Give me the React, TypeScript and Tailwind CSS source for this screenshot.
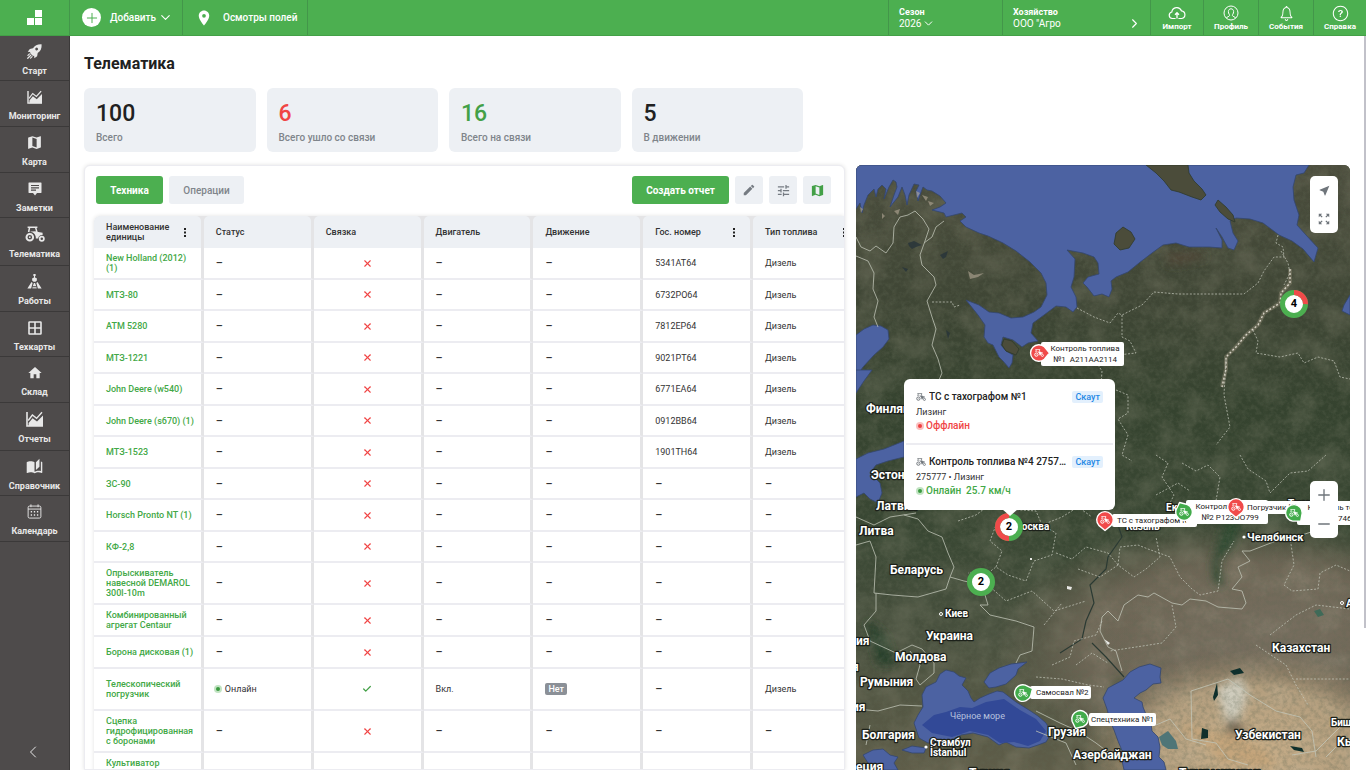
import type { ReactNode } from 'react';
import clsx from 'clsx';
import { IoIosNotificationsOutline, IoIosHelpCircleOutline } from 'react-icons/io';
import { MdAutoStories, MdEdit, MdHome, MdMap, MdNearMe, MdPlace, MdTune, MdZoomOutMap } from 'react-icons/md';
import { Check, ChevronDown, ChevronLeft, ChevronRight, Minus, Plus, X } from 'lucide-react';

/* ---------- Icons ---------- */

function TractorIcon({ className }: { className?: string }) {
  return (
    <svg viewBox="0 0 20 16" className={className} fill="none" aria-hidden="true">
      <circle cx="4.8" cy="11.2" r="3.3" stroke="currentColor" strokeWidth="2" />
      <circle cx="4.8" cy="11.2" r="0.9" fill="currentColor" />
      <circle cx="16.8" cy="12.8" r="2.1" stroke="currentColor" strokeWidth="1.7" />
      <path d="M2.6 1.2h9.8M4.6 1.4l-1 4.6M10.6 1.4l1.4 5" stroke="currentColor" strokeWidth="1.5" />
      <path d="M3 5.8c4-.8 7.3 1.5 7.8 5.2v1.6h2.4c.2-2.6 2-3.8 4.4-3.6V6.8L12 5.8l-1.6-.6z" fill="currentColor" />
    </svg>
  );
}

function RocketIcon({ className }: { className?: string }) {
  return (
    <svg viewBox="0 0 16 16" className={className} aria-hidden="true">
      <path
        fillRule="evenodd"
        d="M15.6.4C11.2.2 8.4 1.6 6.4 4.6L3 5.2.8 8.2l2.8.2-.4 1.2 3.2 3.2 1.2-.4.2 2.8 3-2.2.6-3.4c3-2 4.4-4.8 4.2-9.2zM9.4 6.6a1.5 1.5 0 1 1 2.1-2.1 1.5 1.5 0 0 1-2.1 2.1z"
        fill="currentColor"
      />
      <path d="M2.6 10.6L1 12.2M4 12L.8 15.2M5.4 13.4L3.8 15" stroke="currentColor" strokeWidth="1.3" strokeLinecap="round" />
    </svg>
  );
}

function ChartIcon({ className }: { className?: string }) {
  return (
    <svg viewBox="0 0 18 16" className={className} fill="none" aria-hidden="true">
      <path d="M1 1v14h16" stroke="currentColor" strokeWidth="1.6" />
      <path d="M2.2 9.5L6.4 4l4.2 3.4L16 1.2" stroke="currentColor" strokeWidth="1.4" />
      <path d="M2.6 15V12l4-4.8 4.4 3.4L17 4.6V15z" fill="currentColor" />
    </svg>
  );
}

function NoteIcon({ className }: { className?: string }) {
  return (
    <svg viewBox="0 0 14 14" className={className} aria-hidden="true">
      <path
        fillRule="evenodd"
        d="M1 .6h12c.3 0 .5.2.5.5v9.4c0 .3-.2.5-.5.5H9l-2 2.4L5 11H1c-.3 0-.5-.2-.5-.5V1.1C.5.8.7.6 1 .6zM3 3v1.1h8V3zm0 2.3v1.1h8V5.3zm0 2.3v1.1h5V7.6z"
        fill="currentColor"
      />
    </svg>
  );
}

function GridIcon({ className }: { className?: string }) {
  return (
    <svg viewBox="0 0 14 14" className={className} fill="none" stroke="currentColor" strokeWidth="1.6" aria-hidden="true">
      <rect x="1" y="1" width="12" height="12" rx="0.6" />
      <path d="M7 1v12M1 7h12" />
    </svg>
  );
}

function WorksIcon({ className }: { className?: string }) {
  return (
    <svg viewBox="0 0 16 16" className={className} aria-hidden="true">
      <path d="M6.8 0h2.4v2h-.6v1.8l2 1-.2 2.4-1.4 1H7l-1.4-1-.2-2.4 2-1V2h-.6z" fill="currentColor" />
      <path d="M4.8 8.6L.4 15.4h4L6 9.6zM11.2 8.6l4.4 6.8h-4L10 9.6zM7.4 9.6h1.2l1.2 3.2H6.2z" fill="currentColor" />
      <path d="M6 13.6h4l.4 1.8H5.6z" fill="currentColor" opacity=".75" />
    </svg>
  );
}

function CalendarIcon({ className }: { className?: string }) {
  return (
    <svg viewBox="0 0 16 16" className={className} fill="none" stroke="currentColor" aria-hidden="true">
      <rect x="1.2" y="2.2" width="13.6" height="12.8" rx="1.5" />
      <path d="M1.2 5.4h13.6M4.2.4v3M11.8.4v3" />
      <path d="M4 8.2h1.4M7.3 8.2h1.4M10.6 8.2H12M4 11.6h1.4M7.3 11.6h1.4M10.6 11.6H12" strokeWidth="1.6" />
    </svg>
  );
}

function ProfileIcon({ className }: { className?: string }) {
  return (
    <svg viewBox="0 0 16 16" className={className} fill="none" stroke="currentColor" aria-hidden="true">
      <circle cx="8" cy="8" r="7" />
      <path d="M3.4 13c.5-1.4 3-1.2 3.2-2.6.1-.8-1.2-1.6-1.2-3.8 0-1.7 1.1-2.8 2.6-2.8s2.6 1.1 2.6 2.8c0 2.2-1.3 3-1.2 3.8.2 1.4 2.7 1.2 3.2 2.6" />
    </svg>
  );
}

function CloudIcon({ className }: { className?: string }) {
  return (
    <svg viewBox="0 0 18 14" className={className} fill="none" stroke="currentColor" aria-hidden="true">
      <path d="M7.6 12.5H4.2A3.3 3.3 0 0 1 3.8 6 5 5 0 0 1 13.4 4.8a3.9 3.9 0 0 1 .4 7.7H10.4" strokeWidth="1.2" />
      <path d="M9 12.5V7M7 8.8l2-2.1 2 2.1" strokeWidth="1.3" />
    </svg>
  );
}

function LogoIcon() {
  return (
    <svg viewBox="0 0 15 15" className="size-[15px]" fill="#fff" aria-hidden="true">
      <path d="M8 0h7v7H8zM0 8h7v7H0zM8 8h7v7H8z" />
    </svg>
  );
}

function Dots() {
  return (
    <svg viewBox="0 0 2 9" className="h-[9px] w-[2px] shrink-0" fill="#222" aria-hidden="true">
      <path d="M0 0h2v2H0zM0 3.5h2v2H0zM0 7h2v2H0z" />
    </svg>
  );
}

function StatusDot({ online }: { online?: boolean }) {
  return (
    <span
      className={clsx(
        'inline-block size-1 shrink-0 rounded-full ring-2',
        online ? 'bg-[#3a9a40] ring-[#4caf50]/35' : 'bg-[#f04040] ring-[#f04848]/35',
      )}
    />
  );
}

/* ---------- Header ---------- */

function Header() {
  const actions: { label: string; icon: ReactNode; width: string }[] = [
    { label: 'Импорт', icon: <CloudIcon className="h-[14px] w-[18px]" />, width: 'w-[53px] border-r' },
    { label: 'Профиль', icon: <ProfileIcon className="size-4" />, width: 'w-[55px] border-r' },
    { label: 'События', icon: <IoIosNotificationsOutline className="size-[19px]" />, width: 'w-[55px] border-r' },
    { label: 'Справка', icon: <IoIosHelpCircleOutline className="size-[19px]" />, width: 'w-[52px]' },
  ];

  return (
    <header className="flex h-9 shrink-0 border-b border-[#43a047] bg-[#4caf50] text-white">
      <a href="#" aria-label="Главная" className="flex w-[70px] items-center justify-center border-r border-[#43964a]">
        <LogoIcon />
      </a>
      <button type="button" className="flex w-[113px] items-center border-r border-[#43964a] pl-3 text-[10px] font-medium">
        <span className="mr-[9px] flex size-[19px] items-center justify-center rounded-full bg-white text-[#4caf50]">
          <Plus className="size-4" strokeWidth={1.5} />
        </span>
        Добавить
        <ChevronDown className="ml-[2px] size-[15px]" strokeWidth={1.8} />
      </button>
      <a href="#" className="flex w-[125px] items-center border-r border-[#43964a] pl-3 text-[10px] font-medium whitespace-nowrap">
        <MdPlace className="mr-[10px] size-[18px]" />
        Осмотры полей
      </a>
      <div className="flex-1 border-r border-[#43964a]" />
      <button type="button" className="w-[114px] border-r border-[#43964a] pl-[10px] text-left leading-[11px]">
        <span className="block text-[9px] font-bold">Сезон</span>
        <span className="flex h-[11px] items-center text-[10px]">
          2026 <ChevronDown className="ml-px size-[13px]" strokeWidth={1.8} />
        </span>
      </button>
      <button type="button" className="w-[148px] border-r border-[#43964a] pr-2 pl-[10px] text-left leading-[11px]">
        <span className="block text-[9px] font-bold">Хозяйство</span>
        <span className="flex h-[11px] items-center justify-between text-[10px]">
          ООО "Агро <ChevronRight className="size-[15px]" strokeWidth={1.8} />
        </span>
      </button>
      {actions.map((a) => (
        <button
          key={a.label}
          type="button"
          className={clsx(
            'flex flex-col items-center justify-center border-[#43964a] text-[8px] leading-[9px] font-bold',
            a.width,
          )}
        >
          <span className="flex h-[18px] items-center">{a.icon}</span>
          {a.label}
        </button>
      ))}
    </header>
  );
}

/* ---------- Sidebar ---------- */

const NAV: { label: string; icon: ReactNode; tall?: boolean }[] = [
  { label: 'Старт', icon: <RocketIcon className="size-[15px]" /> },
  { label: 'Мониторинг', icon: <ChartIcon className="h-[14px] w-4" /> },
  { label: 'Карта', icon: <MdMap className="size-[17px]" /> },
  { label: 'Заметки', icon: <NoteIcon className="size-[14px]" /> },
  { label: 'Телематика', icon: <TractorIcon className="h-4 w-5" />, tall: true },
  { label: 'Работы', icon: <WorksIcon className="size-[15px]" /> },
  { label: 'Техкарты', icon: <GridIcon className="size-[14px]" /> },
  { label: 'Склад', icon: <MdHome className="size-4" /> },
  { label: 'Отчеты', icon: <ChartIcon className="h-4 w-[18px]" />, tall: true },
  { label: 'Справочник', icon: <MdAutoStories className="size-[17px]" /> },
  { label: 'Календарь', icon: <CalendarIcon className="size-[15px]" /> },
];

function Sidebar() {
  return (
    <nav className="flex w-[70px] shrink-0 flex-col border-r border-[#3b3939] bg-[#4e4b4b] text-[#e8e8e8]">
      {NAV.map((item, i) => (
        <a
          key={item.label}
          href="#"
          className={clsx(
            'flex shrink-0 flex-col items-center border-b border-[#3b3939] pt-[6px] text-[9px] leading-[10px] font-bold',
            item.tall ? 'h-12' : i % 3 ? 'h-[46px]' : 'h-[45px]',
          )}
        >
          <span className={clsx('mb-[5px] flex items-center', item.tall ? 'h-5' : 'h-[19px]')}>{item.icon}</span>
          {item.label}
        </a>
      ))}
      <button type="button" aria-label="Свернуть" className="mt-auto mb-2 flex h-5 items-center justify-center pr-1">
        <ChevronLeft className="size-5" strokeWidth={1.2} />
      </button>
    </nav>
  );
}

/* ---------- Stats ---------- */

const STATS = [
  { value: 100, label: 'Всего', color: 'text-[#212121]' },
  { value: 6, label: 'Всего ушло со связи', color: 'text-[#f04545]' },
  { value: 16, label: 'Всего на связи', color: 'text-[#43a047]' },
  { value: 5, label: 'В движении', color: 'text-[#212121]' },
];

function Stats() {
  return (
    <div className="grid w-[719px] grid-cols-4 gap-[11px]">
      {STATS.map((s) => (
        <div key={s.label} className="h-16 rounded-md bg-[#edf0f4] px-3 pt-[13px]">
          <div className={clsx('text-[23px] leading-[26px] font-medium', s.color)}>{s.value}</div>
          <div className="mt-1 text-[10px] leading-[14px] font-medium text-[#7f858b]">{s.label}</div>
        </div>
      ))}
    </div>
  );
}

/* ---------- Table ---------- */

const COLUMNS = [
  { title: 'Наименование единицы', menu: true },
  { title: 'Статус' },
  { title: 'Связка' },
  { title: 'Двигатель' },
  { title: 'Движение' },
  { title: 'Гос. номер', menu: true },
  { title: 'Тип топлива', menu: true },
];

type Unit = { name: string; plate?: string; fuel?: string; online?: boolean; tall?: boolean };

const UNITS: Unit[] = [
  { name: 'New Holland (2012) (1)', plate: '5341АТ64', fuel: 'Дизель' },
  { name: 'МТЗ-80', plate: '6732РО64', fuel: 'Дизель' },
  { name: 'АТМ 5280', plate: '7812ЕР64', fuel: 'Дизель' },
  { name: 'МТЗ-1221', plate: '9021РТ64', fuel: 'Дизель' },
  { name: 'John Deere (w540)', plate: '6771ЕА64', fuel: 'Дизель' },
  { name: 'John Deere (s670) (1)', plate: '0912ВВ64', fuel: 'Дизель' },
  { name: 'МТЗ-1523', plate: '1901ТН64', fuel: 'Дизель' },
  { name: 'ЗС-90' },
  { name: 'Horsch Pronto NT (1)' },
  { name: 'КФ-2,8' },
  { name: 'Опрыскиватель навесной DEMAROL 300l-10m', tall: true },
  { name: 'Комбинированный агрегат Centaur' },
  { name: 'Борона дисковая (1)' },
  { name: 'Телескопический погрузчик', fuel: 'Дизель', online: true, tall: true },
  { name: 'Сцепка гидрофицированная с боронами', tall: true },
  { name: 'Культиватор предпосевной прицепной', tall: true },
];

const CELL = 'border-r-[3px] border-b-2 border-r-[#e4e4e6] border-b-[#ececf1] pl-3 align-middle';

function Empty() {
  return <span className="block pt-[2px] text-[11px] font-medium">–</span>;
}

function UnitsTable() {
  return (
    <div className="ml-[9px] overflow-hidden rounded-tl-md shadow-[0_0_4px_rgba(0,0,0,0.12)]">
      <table className="w-[769px] table-fixed border-separate border-spacing-0 text-left text-[9px] leading-[10px] text-[#333]">
        <thead>
          <tr className="h-8">
            {COLUMNS.map((c) => (
              <th key={c.title} scope="col" className="bg-[#e4e4e6] p-0 pr-[3px] font-medium first:rounded-tl-md">
                <span className="flex h-8 items-center justify-between rounded-t-[5px] bg-[#edf0f4] pr-[15px] pl-3">
                  <span className="max-w-[66px]">{c.title}</span>
                  {c.menu && <Dots />}
                </span>
              </th>
            ))}
          </tr>
        </thead>
        <tbody>
          {UNITS.map((u, i) => (
            <tr key={u.name} className={clsx(u.tall ? 'h-[42px]' : i % 2 && i < 10 ? 'h-[31px]' : 'h-8')}>
              <td className={clsx(CELL, 'pr-[5px] font-medium')}>
                <a href="#" className="block text-[#42a846]">
                  {u.name}
                </a>
              </td>
              <td className={CELL}>
                {u.online ? (
                  <span className="flex items-center gap-[5px]">
                    <StatusDot online /> Онлайн
                  </span>
                ) : (
                  <Empty />
                )}
              </td>
              <td className={clsx(CELL, 'pr-3')}>
                {u.online ? (
                  <Check className="mx-auto size-[10px] text-[#43a047]" strokeWidth={3} />
                ) : (
                  <X className="mx-auto size-[11px] text-[#f04545]" strokeWidth={2.4} />
                )}
              </td>
              <td className={CELL}>{u.online ? 'Вкл.' : <Empty />}</td>
              <td className={CELL}>
                {u.online ? (
                  <span className="inline-block rounded-xs bg-[#8b9097] px-[3px] py-px font-medium text-white">Нет</span>
                ) : (
                  <Empty />
                )}
              </td>
              <td className={CELL}>{u.plate ?? <Empty />}</td>
              <td className={CELL}>{u.fuel ?? <Empty />}</td>
            </tr>
          ))}
        </tbody>
      </table>
    </div>
  );
}

function UnitsPanel() {
  const iconButton = 'flex size-7 items-center justify-center rounded-[3px] bg-[#edf0f4] text-[#757b82]';
  return (
    <section className="overflow-hidden rounded-t-md border border-[#ececf1] bg-white shadow-[0_0_4px_rgba(0,0,0,0.12)]">
      <div className="flex items-center gap-[6px] pt-[10px] pr-[13px] pb-3 pl-[11px] text-[10px]">
        <button type="button" className="h-7 w-[67px] rounded-[3px] bg-[#4caf50] font-bold text-white">
          Техника
        </button>
        <button type="button" className="h-7 w-[75px] rounded-[3px] bg-[#edf0f4] font-medium text-[#7f858b]">
          Операции
        </button>
        <button type="button" className="ml-auto h-7 w-[97px] rounded-[3px] bg-[#4caf50] font-bold text-white">
          Создать отчет
        </button>
        <button type="button" aria-label="Редактировать" className={iconButton}>
          <MdEdit className="size-[14px]" />
        </button>
        <button type="button" aria-label="Настройки" className={iconButton}>
          <MdTune className="size-[15px]" />
        </button>
        <button type="button" aria-label="Карта" className={iconButton}>
          <MdMap className="size-[15px] text-[#43a047]" />
        </button>
      </div>
      <UnitsTable />
    </section>
  );
}

/* ---------- Map ---------- */

const SEAS = [
  // Barents and White seas
  'M0 0H453L448 8 440 10 437 22 438 35 443 50 441 60 450 70 462 83 458 97 447 84 436 76 423 70 407 58 394 54 380 53 374 56 377 68 382 76 378 85 372 83 366 72 360 63 366 75 366 83 353 82 333 82 320 78 307 80 296 88 283 98 272 107 260 112 255 116 256 124 253 132 246 129 238 131 231 122 227 118 232 112 243 109 242 98 238 92 227 88 211 85 219 94 218 112 215 122 220 132 221 142 217 147 210 142 200 141 188 150 177 158 175 168 182 176 172 178 166 182 157 175 147 172 145 180 150 186 157 190 156 198 153 203 147 196 143 192 137 180 132 178 128 172 129 160 122 150 110 135 123 140 133 147 143 148 155 153 167 152 178 147 185 142 191 130 190 118 185 108 174 97 160 86 147 78 132 71 123 68 110 62 104 56 110 52 106 48 98 50 90 52 88 48 76 45 84 42 90 38 84 31 76 26 71 25 67 22 64 30 62 36 60 26 63 20 58 19 53 30 51 40 49 30 46 22 42 32 34 42 38 30 41 22 40 17 37 15 33 22 28 34 30 24 26 20 22 24 20 32 18 24 12 30 8 40 6 48 4 38 0 44Z',
  'M0 170L8 164 17 160 25 161 32 165 33 174 27 182 18 190 7 202 0 212Z',
  'M0 205H16L8 216 0 228Z',
  // Gulf of Finland and Riga
  'M0 294L12 288 28 284 48 276V292L32 296 20 300 14 308 24 318 26 328 22 338 14 334 8 328 0 332Z',
  // Azov
  'M128 517L134 508 143 503 155 499 171 497 162 504 160 510 150 519 140 522 133 523Z',
  // Caspian
  'M247 533L252 523 267 515 274 507 283 502 294 499 305 503 304 512 305 518 297 519 290 525 284 528 278 533 286 537 287 542 291 552 295 558 296 566 302 572 304 582 303 592 308 597 310 605H268L266 596 267 588 262 576 258 565 254 556 251 544Z',
  // Aegean and Marmara
  'M7 590L17 585 27 584 34 590 42 592 38 598 42 605H18L12 598Z',
  'M46 585L56 581 70 583 68 588 56 588Z',
  'M494 130L488 140 486 146 494 150Z',
];

const BLACK_SEA =
  'M90 505L98 507 103 511 110 513 106 520 112 526 115 533 118 537 124 533 133 529 141 526 147 527 160 537 173 545 182 551 190 558 194 565 193 572 190 577 182 580 173 583 160 582 150 577 143 580 132 572 117 568 105 570 95 576 83 577 72 578 63 573 58 558 62 550 67 542 66 530 70 522 80 517 84 509Z';

const ISLANDS = [
  'M290 0H332L333 8 338 16 346 24 350 30 345 35 336 32 323 27 315 25 308 16 300 8Z',
  'M267 62L275 67 279 74 273 83 264 85 258 79 260 68Z',
  'M362 35L370 42 377 50 379 57 372 54 364 47 359 40Z',
  'M148 174L156 176 163 184 160 190 150 186 146 180Z',
];

const STATE_BORDERS = [
  'M0 72L5 82 14 86 20 81 30 88 37 78 38 62 44 52 52 50 59 46 67 54 73 64 69 76 64 90 66 100 78 112 80 120 71 136 76 152 80 164 76 180 82 194 86 208 80 222',
  'M0 91L12 96 18 108 17 124 22 136 18 152 22 162',
  'M88 56L80 62 76 72 68 78',
  'M48 350L62 354 72 366 86 372 92 388 98 402 94 412 108 416 126 420 132 440 124 440 134 450 160 456 178 462 176 486 164 490 160 498',
  'M0 352L18 360 34 352 60 348M0 380L14 376 20 392 18 428 36 430 62 432 90 424 94 412',
  'M20 428L20 446 8 460 14 476 40 488 56 480 66 484 78 498 78 508 64 520 60 514 64 500 54 486',
  'M0 544L22 546 44 540 66 541M14 560L10 580',
  'M246 452L252 446 262 456 268 440 282 430 292 432 298 428 316 438 326 440 334 434 350 436 362 442 386 444 390 438 386 426 376 424 386 412 382 402 394 396 386 386 394 386 420 376 440 372 464 364 474 356',
  'M246 452L244 466 252 482 260 486 266 506',
  'M335 526L336 574 360 578 372 594 392 600M335 526L372 514 394 530 420 546 444 552 456 566 460 592',
  'M180 546L204 558 222 566 240 578 256 590M180 566L210 578 220 600M300 560L314 554 330 574 350 580',
  'M470 592L482 580 494 574M436 590L460 586 486 560',
];

const REGION_BORDERS = [
  'M221 143L238 152 254 158 262 148 266 150 286 140 298 127 322 129 388 129 402 118 408 106 418 92 428 92 427 82 420 78 422 70',
  'M266 150L266 172 274 176 280 188 262 190',
  'M76 137L96 137 98 142 104 140',
  'M397 165L402 176 400 188 424 192 442 188 448 198 462 192 478 196 484 212 494 214',
  'M242 200L246 206 245 220M260 225L272 230 272 248 262 254 272 270 266 290 276 296',
  'M300 290L312 298 306 312 318 330 310 346M326 298L340 306 352 300 364 312 360 336M384 290L392 304 410 316 414 328 434 308 452 306 470 290',
  'M102 356L120 350 136 338 152 344 180 346 186 360 200 368 196 390 178 396 170 416 152 410 140 402 132 408 112 408',
  'M140 402L146 386 134 376 140 360M186 360L206 352 222 342 236 352M200 388L216 394 230 382 252 388 262 400',
  'M222 404L244 412 262 400 278 412 290 404 304 392 300 372M262 400L264 382 282 380 292 384 314 392 324 412 336 424 344 430 362 426 366 396 378 376',
  'M132 420L150 436 176 426 198 446 230 436M188 460L206 438M196 500L214 492 218 476 240 470 246 456M220 500L236 488 252 498M180 512L206 514 232 520 248 522',
  'M434 372L438 400 428 420 436 426 462 424 464 408 480 400 494 406M316 440L320 462 306 478 280 482 254 486M414 470L440 450 460 440 494 444',
  'M440 514L494 514M400 480L430 500 440 520 452 540M300 330L322 318 334 326M464 330L480 340 476 360',
  'M425 86L432 98 434 108 428 120M370 195L368 230 374 262 360 280',
];

const RIDGE = 'M434 104L434 118 425 128 424 138 408 148 402 160 390 170 380 182 370 192 370 204 366 222';
const RIVERS = 'M262 360L266 372 252 392 250 404 234 420 238 438 230 456 226 474 204 488M236 478L250 492 268 512';

const MAP_LABELS: { text: string; x: number; y: number; size: number }[] = [
  { text: 'Финляндия', x: 10, y: 248, size: 12 },
  { text: 'Эстония', x: 15, y: 314, size: 12 },
  { text: 'Латвия', x: 20, y: 345, size: 12 },
  { text: 'Литва', x: 3, y: 370, size: 12 },
  { text: 'Беларусь', x: 34, y: 409, size: 12 },
  { text: 'Украина', x: 70, y: 475, size: 12 },
  { text: 'Молдова', x: 39, y: 496, size: 12 },
  { text: 'Румыния', x: 4, y: 521, size: 12 },
  { text: 'Болгария', x: 6, y: 574, size: 12 },
  { text: 'Грузия', x: 192, y: 571, size: 12 },
  { text: 'Азербайджан', x: 217, y: 594, size: 12 },
  { text: 'Узбекистан', x: 379, y: 574, size: 12 },
  { text: 'Казахстан', x: 416, y: 487, size: 12 },
  { text: 'Туркменистан', x: 323, y: 612, size: 12 },
  { text: 'Турция', x: 113, y: 612, size: 12 },
  { text: 'Кыргызстан', x: 481, y: 581, size: 12 },
  { text: 'ия', x: 0, y: 480, size: 12 },
  { text: 'ия', x: -4, y: 546, size: 12 },
  { text: 'я', x: -4, y: 506, size: 12 },
  { text: 'еция', x: 0, y: 606, size: 12 },
  { text: 'Киев', x: 89, y: 452, size: 10 },
  { text: 'Стамбул', x: 74, y: 581, size: 10 },
  { text: 'İstanbul', x: 74, y: 591, size: 10 },
  { text: 'Москва', x: 157, y: 365, size: 10 },
  { text: 'Казань', x: 270, y: 365, size: 10 },
  { text: 'Екатеринбург', x: 310, y: 346, size: 10 },
  { text: 'Тюмень', x: 432, y: 342, size: 10 },
  { text: 'Челябинск', x: 391, y: 376, size: 11 },
  { text: 'Бишкек', x: 475, y: 561, size: 10 },
  { text: 'Астана', x: 490, y: 442, size: 10 },
];

function MapCanvas() {
  return (
    <svg
      viewBox="0 0 494 605"
      preserveAspectRatio="xMinYMin slice"
      className="absolute inset-0 size-full"
      role="img"
      aria-label="Спутниковая карта"
    >
      <defs>
        <linearGradient id="land" x1="0" y1="0" x2="0" y2="1">
          <stop offset="0" stopColor="#4b4d3d" />
          <stop offset="0.22" stopColor="#3f4635" />
          <stop offset="0.4" stopColor="#35432f" />
          <stop offset="0.62" stopColor="#3a4834" />
          <stop offset="0.78" stopColor="#48503e" />
          <stop offset="1" stopColor="#5f5d49" />
        </linearGradient>
        <radialGradient id="steppe" cx="0.5" cy="0.5" r="0.5">
          <stop offset="0" stopColor="#786f60" />
          <stop offset="0.65" stopColor="#716858" stopOpacity="0.9" />
          <stop offset="1" stopColor="#6b6252" stopOpacity="0" />
        </radialGradient>
        <radialGradient id="desert" cx="0.5" cy="0.5" r="0.5">
          <stop offset="0" stopColor="#c9af8a" />
          <stop offset="0.65" stopColor="#b7a180" stopOpacity="0.95" />
          <stop offset="1" stopColor="#8d7c62" stopOpacity="0" />
        </radialGradient>
        <filter id="grain" x="0" y="0" width="100%" height="100%">
          <feTurbulence type="fractalNoise" baseFrequency="0.22" numOctaves="4" seed="7" />
          <feColorMatrix values="0 0 0 0 0.12  0 0 0 0 0.14  0 0 0 0 0.09  1.6 0 0 0 -0.6" />
        </filter>
        <filter id="patches" x="0" y="0" width="100%" height="100%">
          <feTurbulence type="fractalNoise" baseFrequency="0.035" numOctaves="5" seed="3" />
          <feColorMatrix values="0 0 0 0 0.55  0 0 0 0 0.5  0 0 0 0 0.38  0 1.6 0 0 -0.65" />
        </filter>
        <filter id="soft">
          <feGaussianBlur stdDeviation="4" />
        </filter>
      </defs>

      <rect width="494" height="605" fill="url(#land)" />
      <ellipse cx="390" cy="480" rx="250" ry="125" fill="url(#steppe)" />
      <ellipse cx="420" cy="460" rx="190" ry="80" fill="url(#steppe)" opacity="0.6" />
      <ellipse cx="395" cy="590" rx="170" ry="105" fill="url(#desert)" />
      <g filter="url(#soft)">
        <path d="M362 395L378 380 384 360 374 350 364 372 356 400 358 418 368 422Z" fill="#29472f" />
        <path d="M360 524L384 512 392 528 384 552 370 556Z" fill="#cfccbd" />
        <path d="M374 552L390 562 380 576 368 570Z" fill="#736653" />
        <path d="M320 560L370 600 420 605 410 585 380 570Z" fill="#c4a47a" />
        <path d="M10 455L30 470 40 500 22 500Z" fill="#26402b" />
        <path d="M252 530L262 514 270 516 256 526Z" fill="#34462f" />
        <path d="M310 88L340 86 352 92 330 98 312 100Z" fill="#504638" />
      </g>
      <rect width="494" height="605" filter="url(#patches)" opacity="0.24" />
      <rect width="494" height="605" filter="url(#grain)" opacity="0.45" />

      <g fill="#4c62a2" stroke="#33466f" strokeWidth="0.8">
        {SEAS.map((d) => (
          <path key={d} d={d} />
        ))}
        <path d={BLACK_SEA} />
      </g>
      <path
        d="M66 560L78 550 90 547 104 542 116 543 130 537 148 534 164 545 180 554 190 566 184 576 172 581 158 577 144 578 132 570 114 566 96 572 76 568Z"
        fill="#324997"
      />
      <g fill="#4b4c3a" stroke="#2f3a2c" strokeWidth="0.8">
        {ISLANDS.map((d) => (
          <path key={d} d={d} />
        ))}
      </g>

      {/* lakes, snow and clouds */}
      <path d="M303 572L312 566 320 576 322 584 312 584 306 580Z" fill="#4e7577" />
      <path
        d="M346 563L352 565 352 573 345 574ZM374 506L384 503 388 508 378 510ZM357 532L361 518 362 530 358 536ZM434 581L446 583 448 587 438 585Z"
        fill="#0f2f2c"
      />
      <path d="M458 446L464 444 468 450 462 452Z" fill="#3f6a58" />
      <path d="M52 78L58 76 66 80 60 82 56 84 53 81ZM84 90L92 86 90 92 87 94ZM90 165L94 168 92 174ZM46 102L52 104 50 107Z" fill="#27333a" opacity="0.8" />
      <path
        d="M112 106L118 110 128 108 122 112 114 114ZM66 30L72 32 70 36ZM38 46L44 44 42 50ZM60 26L64 28 61 33ZM26 48L29 51 26 54ZM72 36L78 38 74 41ZM4 42L7 44 5 48Z"
        fill="#b5aa98"
        opacity="0.6"
      />
      <path d="M211 421L216 422 215 425 211 424ZM174 393H176V395H174ZM248 474L254 478 252 480Z" fill="#e9e9e6" />

      <g fill="none">
        <path d={RIVERS} stroke="#2b3a33" strokeWidth="1.2" />
        <path d={RIDGE} stroke="#8f8873" strokeWidth="4" opacity="0.45" />
        <path d={RIDGE} stroke="#d9d5c8" strokeWidth="1.4" strokeDasharray="2 2" />
        <g stroke="#c3c7ba" strokeWidth="0.9" opacity="0.85">
          {STATE_BORDERS.map((d) => (
            <path key={d} d={d} />
          ))}
        </g>
        <g stroke="#c6c9bd" strokeWidth="0.9" strokeDasharray="2 1.6" opacity="0.8">
          {REGION_BORDERS.map((d) => (
            <path key={d} d={d} />
          ))}
        </g>
      </g>

      <g className="font-bold" fill="#fff" stroke="#1c211a" strokeWidth="2.5" strokeLinejoin="round" paintOrder="stroke">
        {MAP_LABELS.map((l) => (
          <text key={`${l.text}${l.y}`} x={l.x} y={l.y} fontSize={l.size}>
            {l.text}
          </text>
        ))}
      </g>
      <text x="94" y="554" fontSize="9" fill="#b6c1de">
        Чёрное море
      </text>
      <g fill="none" stroke="#fff">
        <circle cx="85" cy="449" r="1.5" />
        <circle cx="486" cy="438" r="1.5" />
      </g>
      <circle cx="70" cy="582" r="1.6" fill="#fff" />
      <circle cx="388" cy="372" r="1.6" fill="#fff" />
    </svg>
  );
}

type Pin = {
  lines: string[];
  color: string;
  /* direction of the pin's tip, degrees clockwise from down */
  tip: number;
  pin: string;
  label: string;
};

const PINS: Pin[] = [
  { lines: ['Контроль топлива', '№1  А211АА2114'], color: '#f04a4a', tip: -90, pin: 'left-[172px] top-[177px]', label: 'left-[185px] top-[177px] w-[83px] pl-[7px]' },
  { lines: ['ТС с тахографом №2'], color: '#f04a4a', tip: 0, pin: 'left-[238px] top-[344px]', label: 'left-[256px] top-[349px] pl-[5px]' },
  { lines: ['Контроль топлива', '№2 Р123ОО799'], color: '#42ab4b', tip: 155, pin: 'left-[317px] top-[336px]', label: 'left-[330px] top-[335px] w-[82px] pl-[8px]' },
  { lines: ['Погрузчик №2'], color: '#f04a4a', tip: 0, pin: 'left-[369px] top-[331px]', label: 'left-[387px] top-[336px] pl-[4px]' },
  { lines: ['Контроль топлива', '№3 Р7746ВВ46'], color: '#42ab4b', tip: -40, pin: 'left-[427px] top-[337px]', label: 'left-[441px] top-[336px] w-[84px] pl-[8px]' },
  { lines: ['Самосвал №2'], color: '#42ab4b', tip: -115, pin: 'left-[156px] top-[517px]', label: 'left-[174px] top-[521px] pl-[6px]' },
  { lines: ['Спецтехника №1'], color: '#42ab4b', tip: 25, pin: 'left-[213px] top-[543px]', label: 'left-[233px] top-[548px]' },
];

function PinMark({ color, tip, className }: { color: string; tip: number; className: string }) {
  return (
    <span className={clsx('absolute size-[22px]', className)}>
      <svg viewBox="0 0 22 22" className="absolute inset-0 size-full overflow-visible" aria-hidden="true">
        <path
          d="M11 21.5L4.8 16.4A8.3 8.3 0 1 1 17.2 16.4Z"
          fill={color}
          stroke="#fff"
          strokeWidth="1.4"
          strokeLinejoin="round"
          transform={`rotate(${tip} 11 11)`}
        />
      </svg>
      <TractorIcon className="absolute top-[7px] left-[6px] h-2 w-[10px] text-white" />
    </span>
  );
}

function Cluster({ count, share, className }: { count: number; share: number; className: string }) {
  const length = 2 * Math.PI * 11.5;
  return (
    <button type="button" className={clsx('absolute flex size-7 items-center justify-center text-[11px] font-bold text-black', className)}>
      <svg viewBox="0 0 28 28" className="absolute inset-0 size-full" fill="none" aria-hidden="true">
        <circle cx="14" cy="14" r="10" fill="#fff" />
        <circle cx="14" cy="14" r="11.5" stroke="#4caf50" strokeWidth="5" />
        <circle
          cx="14"
          cy="14"
          r="11.5"
          stroke="#f04a4a"
          strokeWidth="5"
          strokeDasharray={`${length * share} ${length}`}
          transform={share === 0.5 ? 'rotate(90 14 14)' : 'rotate(-90 14 14)'}
        />
      </svg>
      <span className="relative">{count}</span>
    </button>
  );
}

function PopupItem({ title, info, online, status }: { title: string; info: string; online?: boolean; status: string }) {
  return (
    <div className="px-3">
      <div className="flex items-center gap-[3px]">
        <TractorIcon className="h-2 w-[10px] shrink-0 text-[#6f757b]" />
        <span className="min-w-0 flex-1 truncate text-[10px] leading-[14px] font-medium text-[#222]">{title}</span>
        <span className="ml-px rounded-xs bg-[#e3f0fd] px-[3px] text-[9px] leading-3 font-medium text-[#1e88e5]">Скаут</span>
      </div>
      <div className="mt-[2px] text-[9px] leading-[13px] text-[#333]">{info}</div>
      <div
        className={clsx(
          'flex items-center gap-1 pl-[2px] text-[10px] leading-[14px] font-medium whitespace-pre',
          online ? 'text-[#42a846]' : 'text-[#f04545]',
        )}
      >
        <StatusDot online={online} /> {status}
      </div>
    </div>
  );
}

function MapPanel() {
  return (
    <section className="relative overflow-hidden rounded-t-md bg-[#3f4833]">
      <MapCanvas />

      {PINS.map((p) => (
        <div
          key={p.lines.join()}
          className={clsx('absolute rounded-xs bg-white px-[2px] py-px text-center text-[8px] leading-[11px] whitespace-pre text-[#222]', p.label)}
        >
          {p.lines.map((line) => (
            <div key={line}>{line}</div>
          ))}
        </div>
      ))}
      {PINS.map((p) => (
        <PinMark key={p.lines.join()} color={p.color} tip={p.tip} className={p.pin} />
      ))}

      <Cluster count={4} share={0.25} className="top-[125px] left-[424px]" />
      <Cluster count={2} share={0.5} className="top-[348px] left-[139px]" />
      <Cluster count={2} share={0} className="top-[403px] left-[111px]" />

      <div className="absolute top-[214px] left-[48px] flex h-[131px] w-[211px] flex-col rounded-md bg-white pt-[11px]">
        <PopupItem title="ТС с тахографом №1" info="Лизинг" status="Оффлайн" />
        <div className="mx-[2px] mt-[10px] mb-[10px] border-t-2 border-[#ececf1]" />
        <PopupItem title="Контроль топлива №4 275777" info="275777 • Лизинг" status="Онлайн  25.7 км/ч" online />
        <span className="absolute top-[130px] left-[98px] border-x-[8px] border-t-[7px] border-x-transparent border-t-white" />
      </div>

      <div className="absolute top-[11px] right-3 flex h-[57px] w-7 flex-col rounded-[5px] bg-white text-[#6f757b]">
        <button type="button" aria-label="Моё местоположение" className="flex flex-1 items-center justify-center">
          <MdNearMe className="size-[13px]" />
        </button>
        <button type="button" aria-label="На весь экран" className="flex flex-1 items-center justify-center">
          <MdZoomOutMap className="size-[14px]" />
        </button>
      </div>
      <div className="absolute top-[316px] right-3 flex h-[57px] w-7 flex-col rounded-[5px] bg-white text-[#6f757b]">
        <button type="button" aria-label="Приблизить" className="flex flex-1 items-center justify-center">
          <Plus className="size-[18px]" strokeWidth={1.8} />
        </button>
        <button type="button" aria-label="Отдалить" className="flex flex-1 items-center justify-center">
          <Minus className="size-[18px]" strokeWidth={1.8} />
        </button>
      </div>
    </section>
  );
}

export default function App() {
  return (
    <div className="flex h-screen flex-col overflow-hidden bg-white font-[Roboto,'Liberation_Sans',sans-serif]">
      <Header />
      <div className="flex min-h-0 flex-1">
        <Sidebar />
        <main className="relative flex min-w-0 flex-1 flex-col pr-4 pl-[14px]">
          <h1 className="pt-[18px] pb-[14px] text-[16px] leading-5 font-bold text-[#212121]">Телематика</h1>
          <Stats />
          <div className="mt-[13px] grid min-h-0 flex-1 grid-cols-[minmax(0,761fr)_minmax(0,494fr)] grid-rows-[minmax(0,1fr)] gap-[11px]">
            <UnitsPanel />
            <MapPanel />
          </div>
          {/* Page scroll thumb */}
          <div className="absolute top-0 right-0 h-[592px] w-[2px] bg-[#c1c1c9]" />
        </main>
      </div>
    </div>
  );
}
